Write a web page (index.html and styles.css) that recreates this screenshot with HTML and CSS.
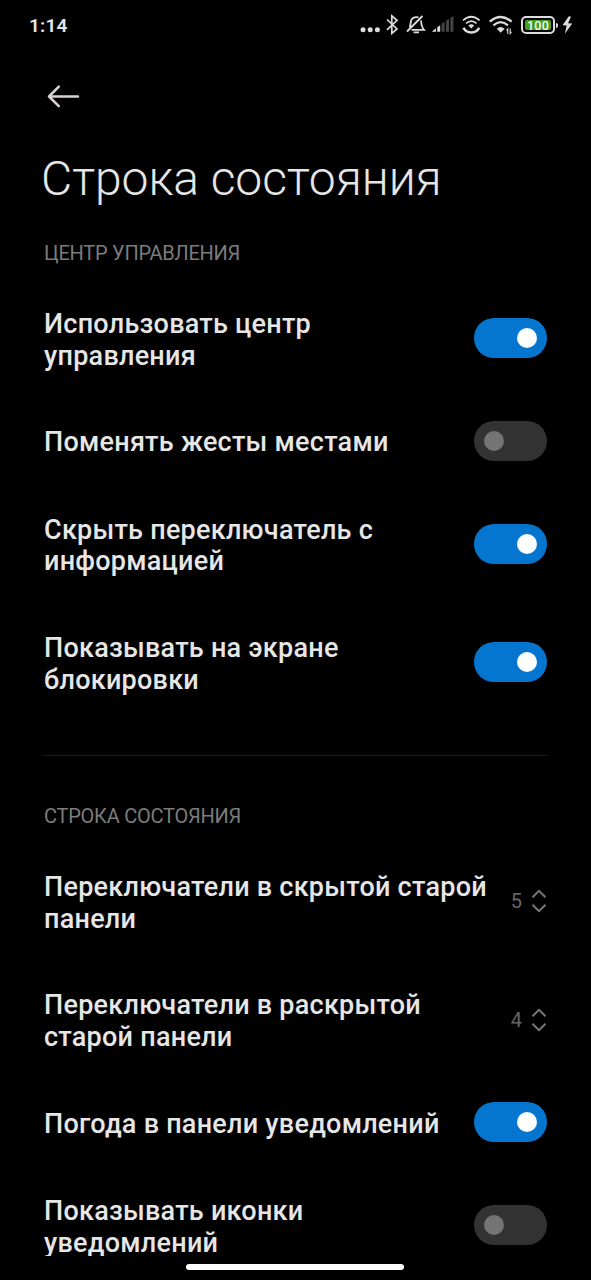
FILE: index.html
```html
<!DOCTYPE html>
<html lang="ru">
<head>
<meta charset="utf-8">
<title>Строка состояния</title>
<link rel="stylesheet" href="styles.css">
</head>
<body>
<div class="screen">
  <header class="status">
    <span class="clock">1:14</span>
    <div class="status-icons">
      <svg width="24" height="40" viewBox="358 5 24 40" fill="#dcdcdc"><circle cx="363" cy="29.8" r="2.5"/><circle cx="370.2" cy="29.8" r="2.5"/><circle cx="377.4" cy="29.8" r="2.5"/></svg>
      <svg width="20" height="40" viewBox="382 5 20 40" fill="none" stroke="#dcdcdc" stroke-width="1.7"><path d="M387 19.5 397 29 391.8 33.5V15.8L397 20.3 387 29.8"/></svg>
      <svg width="26" height="40" viewBox="402 5 26 40" fill="none" stroke="#dcdcdc" stroke-width="1.8"><path d="M407 31.5 422.5 16M409.5 27.5C411 25.5 410.5 22.5 411 20.8 412 17.8 414.5 16.7 418.5 17.3M421 20.5C421.3 25.5 422 27.5 424 29.8H411.5M413.5 32.3H419"/></svg>
      <svg width="28" height="40" viewBox="428 5 28 40" fill="#dcdcdc"><path d="M431.8 31.7 436 28.3V31.7zM437.2 31.7V27.2L440.2 25.2V31.7z"/><path fill="#444" d="M441.6 31.7V23.7L444.6 21.8V31.7zM446 31.7V20.8L449 19V31.7zM450.4 31.7V18L453.4 16V31.7z"/></svg>
      <svg width="28" height="40" viewBox="456 5 28 40" fill="none" stroke="#dcdcdc" stroke-width="1.7"><path d="M463 20.3Q471.3 13.2 479.6 20.3M466 23.4Q471.3 18.7 476.6 23.4"/><path d="M463.5 27.8C466.5 34 476.2 34 479.2 27.8" stroke-width="2.6"/><path d="M468.4 25.4Q471.3 23 474.2 25.4L471.3 28.6z" fill="#dcdcdc" stroke="none"/></svg>
      <svg width="32" height="40" viewBox="484 5 32 40" fill="none" stroke="#dcdcdc" stroke-width="2.2"><path d="M489.8 21.7Q500.7 12.3 511.6 21.7M493.4 25.4Q500.7 19 508 25.4"/><path d="M496.8 28.7Q500.7 25.4 504.6 28.7L500.7 32.8z" fill="#dcdcdc" stroke="none"/><path d="M507.8 34V29L506.6 30.6M510.2 28.5V33.5L511.4 31.9" stroke-width="1.1"/></svg>
      <span class="battery"><span class="battery-level">100</span></span>
      <svg class="bolt" width="18" height="40" viewBox="559 5 18 40" fill="#dcdcdc"><path d="M568.8 16.2 562.5 25.3 566.7 25.6 564.8 33.7 572.3 23.6 568 23.2 571 16.8z"/></svg>
    </div>
  </header>
  <main class="content">
    <div class="back"><svg width="34" height="26" viewBox="46 84 34 26" fill="none" stroke="#d6d2d2" stroke-width="2.5" stroke-linecap="round" stroke-linejoin="round"><path d="M78 96.5H49M58.8 86.6 49 96.5 58.8 106.2"/></svg></div>
    <h1 class="title">Строка состояния</h1>
    <section class="group">
      <h2 class="label">ЦЕНТР УПРАВЛЕНИЯ</h2>
      <div class="row"><span class="name">Использовать центр<br>управления</span><span class="switch on"></span></div>
      <div class="row single"><span class="name">Поменять жесты местами</span><span class="switch"></span></div>
      <div class="row"><span class="name">Скрыть переключатель с<br>информацией</span><span class="switch on"></span></div>
      <div class="row"><span class="name">Показывать на экране<br>блокировки</span><span class="switch on"></span></div>
    </section>
    <section class="group divided">
      <h2 class="label">СТРОКА СОСТОЯНИЯ</h2>
      <div class="row"><span class="name">Переключатели в скрытой старой<br>панели</span><span class="picker">5<svg width="16" height="24" viewBox="0 0 16 24"><path d="M1.5 8.3 8 1.8 14.5 8.3M1.5 15.7 8 22.2 14.5 15.7"/></svg></span></div>
      <div class="row"><span class="name">Переключатели в раскрытой<br>старой панели</span><span class="picker">4<svg width="16" height="24" viewBox="0 0 16 24"><path d="M1.5 8.3 8 1.8 14.5 8.3M1.5 15.7 8 22.2 14.5 15.7"/></svg></span></div>
      <div class="row single"><span class="name">Погода в панели уведомлений</span><span class="switch on"></span></div>
      <div class="row"><span class="name">Показывать иконки<br>уведомлений</span><span class="switch"></span></div>
    </section>
  </main>
  <footer class="nav"><span class="handle"></span></footer>
</div>
</body>
</html>
```
FILE: styles.css
```css
* { box-sizing: border-box; }
body { margin: 0; background: #000; color: #e6e6e6; font-family: Roboto, sans-serif; }
.screen { display: flex; flex-direction: column; width: 591px; height: 1280px; overflow: hidden; background: #000; }
.status { display: flex; justify-content: space-between; flex: none; height: 50px; padding: 5px 14px 0 29px; }
.clock { font-size: 19px; font-weight: 600; line-height: 41px; letter-spacing: .2px; }
.status-icons { display: flex; height: 40px; }
.status-icons svg { flex: none; display: block; }
.battery { position: relative; width: 34px; height: 18px; margin: 11px 4px 0 5px; padding: 2px; border: 2px solid #dcdcdc; border-radius: 5px; }
.battery::after { content: ""; position: absolute; right: -5px; top: 5px; width: 2px; height: 5px; border-radius: 0 2px 2px 0; background: #dcdcdc; }
.battery-level { display: block; height: 10px; border-radius: 2px; background: #439e20; color: #f4fff0; font-size: 12.5px; font-weight: 500; line-height: 11px; text-align: center; letter-spacing: .2px; }
.content { flex: none; height: 1206px; overflow: hidden; padding: 0 44px; }
.back { height: 60px; padding: 34px 0 0 2px; }
.back svg { display: block; }
.title { margin: 38px 0 0 -3px; font-size: 48px; font-weight: 300; line-height: 62px; letter-spacing: -.03px; white-space: nowrap; }
.group { padding-top: 31px; }
.divided { margin: 33px 0 0 -1px; padding: 48px 0 0 1px; border-top: 1px solid #1c1c1c; }
.label { margin: 0 0 14px; font-size: 20px; font-weight: 400; line-height: 24px; letter-spacing: -.24px; color: #7c7c7c; }
.row { display: flex; align-items: center; justify-content: space-between; height: 118.6px; }
.row.single { height: 87px; }
.name { font-size: 27px; font-weight: 500; line-height: 31.8px; letter-spacing: .25px; white-space: nowrap; padding-top: 5px; }
.single .name { padding-top: 4px; }
.switch { flex: none; width: 73px; height: 40px; padding: 10px; border-radius: 20px; background: #333; }
.switch::before { content: ""; display: block; width: 20px; height: 20px; border-radius: 50%; background: #747474; }
.switch.on { background: #0576d0; }
.switch.on::before { margin-left: 33px; background: #fff; }
.picker { display: flex; align-items: center; gap: 9px; color: #666; font-size: 20px; }
.picker svg { fill: none; stroke: #777; stroke-width: 2; }
.nav { display: flex; justify-content: center; padding: 8px 1px 0 0; }
.handle { width: 218px; height: 6px; border-radius: 3px; background: #fff; }
```
